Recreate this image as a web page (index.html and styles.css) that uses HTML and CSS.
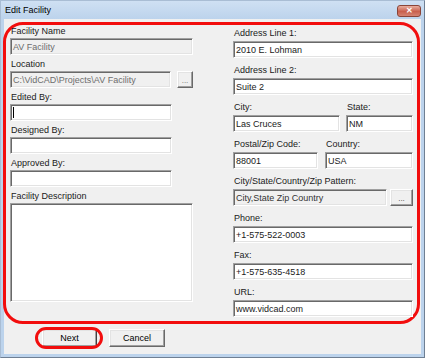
FILE: index.html
```html
<!DOCTYPE html>
<html lang="en">
<head>
  <meta charset="UTF-8" />
  <title>Edit Facility</title>
  <link rel="stylesheet" href="styles.css">
</head>
<body>
  <div class="window">
    <div class="titlebar">
      <span class="title">Edit Facility</span>
      <span class="close" aria-label="Close">&#x2715;</span>
    </div>

    <div class="client">
      <div class="form marked">
        <div class="col col-left">
          <div class="field">
            <label>Facility Name</label>
            <div class="box disabled">AV Facility</div>
          </div>
          <div class="field">
            <label>Location</label>
            <div class="row">
              <div class="box disabled w-loc">C:\VidCAD\Projects\AV Facility</div>
              <div class="btn-dots disabled">...</div>
            </div>
          </div>
          <div class="field">
            <label>Edited By:</label>
            <div class="box w-short"><span class="caret"></span></div>
          </div>
          <div class="field">
            <label>Designed By:</label>
            <div class="box w-short"></div>
          </div>
          <div class="field">
            <label>Approved By:</label>
            <div class="box w-short"></div>
          </div>
          <div class="field">
            <label>Facility Description</label>
            <div class="box textarea"></div>
          </div>
        </div>

        <div class="col col-right">
          <div class="field">
            <label>Address Line 1:</label>
            <div class="box">2010 E. Lohman</div>
          </div>
          <div class="field">
            <label>Address Line 2:</label>
            <div class="box">Suite 2</div>
          </div>
          <div class="row pair-city">
            <div class="field city">
              <label>City:</label>
              <div class="box">Las Cruces</div>
            </div>
            <div class="field state">
              <label>State:</label>
              <div class="box">NM</div>
            </div>
          </div>
          <div class="row pair-zip">
            <div class="field zip">
              <label>Postal/Zip Code:</label>
              <div class="box">88001</div>
            </div>
            <div class="field country">
              <label>Country:</label>
              <div class="box">USA</div>
            </div>
          </div>
          <div class="field">
            <label>City/State/Country/Zip Pattern:</label>
            <div class="row">
              <div class="box readonly w-pattern">City,State Zip Country</div>
              <div class="btn-dots wide">...</div>
            </div>
          </div>
          <div class="field">
            <label>Phone:</label>
            <div class="box">+1-575-522-0003</div>
          </div>
          <div class="field">
            <label>Fax:</label>
            <div class="box">+1-575-635-4518</div>
          </div>
          <div class="field">
            <label>URL:</label>
            <div class="box">www.vidcad.com</div>
          </div>
        </div>
      </div>

      <div class="actions">
        <span class="oval"><button class="btn default">Next</button></span>
        <button class="btn">Cancel</button>
      </div>
    </div>
  </div>
</body>
</html>
```

FILE: styles.css
```css
body {
  margin: 0;
  font-family: "Liberation Sans", Arial, sans-serif;
  font-size: 9px;
  color: #1a1a1a;
}

.window {
  width: 425px;
  height: 358px;
  box-sizing: border-box;
  background: #bcd3ec;
  border: 1px solid #6f7f93;
  border-top-color: #a9bdd4;
  border-left-color: #a9bdd4;
  display: flex;
  flex-direction: column;
}

.titlebar {
  height: 18px;
  flex: none;
  display: flex;
  align-items: center;
  padding-left: 4px;
  background: linear-gradient(#cfe0f3, #bcd3ec);
}

.title {
  font-size: 9px;
  color: #000;
}

.close {
  margin-left: auto;
  margin-right: 3px;
  margin-top: 1px;
  width: 24px;
  height: 12px;
  box-sizing: border-box;
  border: 1px solid #8a4438;
  border-radius: 3px;
  background: linear-gradient(#e8ad9e, #c9604e 55%, #d58372);
  color: #fff;
  font-size: 8px;
  font-weight: bold;
  line-height: 10px;
  text-align: center;
}

.client {
  flex: 1;
  margin: 0 3px 3px 3px;
  background: #f0f0f0;
  display: flex;
  flex-direction: column;
}

/* red annotation outline */
.form {
  display: flex;
  box-sizing: border-box;
  height: 302px;
  margin: 3px 1px 0 -1px;
  padding: 0 4px 0 4px;
  border: 3px solid #f20d0d;
  border-radius: 20px;
  gap: 40px;
}

.col {
  display: flex;
  flex-direction: column;
}

.col-left {
  width: 183px;
  gap: 3px;
}

.col-right {
  width: 180px;
  padding-top: 2px;
  gap: 6px;
}

.field {
  display: flex;
  flex-direction: column;
}

.field label {
  height: 12px;
  line-height: 12px;
  padding-left: 1px;
  margin-bottom: 1px;
  white-space: nowrap;
}

.col-right .field label {
  margin-bottom: 2px;
}

.row {
  display: flex;
}

.box {
  height: 17px;
  box-sizing: border-box;
  display: flex;
  align-items: center;
  padding: 0 2px;
  background: #fff;
  border: 1px solid;
  border-color: #a0a0a0 #fff #fff #a0a0a0;
  box-shadow: inset 1px 1px 0 #696969, inset -1px -1px 0 #e3e3e3;
  white-space: nowrap;
  overflow: hidden;
}

.box.disabled {
  background: #f0f0f0;
  color: #6d6d6d;
}

.box.readonly {
  background: #f0f0f0;
  color: #333;
}

.w-loc { width: 161px; }
.w-short { width: 162px; }
.w-pattern { width: 154px; }

.textarea {
  height: 99px;
}

.caret {
  width: 1px;
  height: 11px;
  background: #000;
}

.btn-dots {
  width: 16px;
  height: 17px;
  margin-left: 6px;
  box-sizing: border-box;
  border: 1px solid;
  border-color: #fff #696969 #696969 #fff;
  box-shadow: inset -1px -1px 0 #a0a0a0, inset 1px 1px 0 #e3e3e3;
  display: flex;
  align-items: center;
  justify-content: center;
  color: #6d6d6d;
  font-size: 8px;
  padding-top: 2px;
}

.btn-dots.wide {
  width: 23px;
  margin-left: 3px;
  color: #444;
}

.pair-city {
  gap: 6px;
}

.city { width: 107px; }
.state { width: 67px; }

.pair-zip {
  gap: 7px;
}

.zip { width: 85px; }
.country { width: 88px; }

.actions {
  display: flex;
  gap: 12px;
  margin-top: 5px;
  padding-left: 38px;
}

.oval {
  position: relative;
  display: flex;
}

.oval::after {
  content: "";
  position: absolute;
  top: -2px;
  bottom: -2px;
  left: -7px;
  right: -6px;
  border: 3px solid #f20d0d;
  border-radius: 12px;
}

.btn {
  width: 56px;
  height: 18px;
  box-sizing: border-box;
  margin: 0;
  padding: 0;
  font-family: inherit;
  font-size: 9px;
  color: #000;
  background: #f0f0f0;
  border: 1px solid;
  border-color: #fff #696969 #696969 #fff;
  box-shadow: inset -1px -1px 0 #a0a0a0, inset 1px 1px 0 #e3e3e3;
}

.btn.default {
  width: 55px;
  border-color: #fff #404040 #404040 #fff;
}
```
